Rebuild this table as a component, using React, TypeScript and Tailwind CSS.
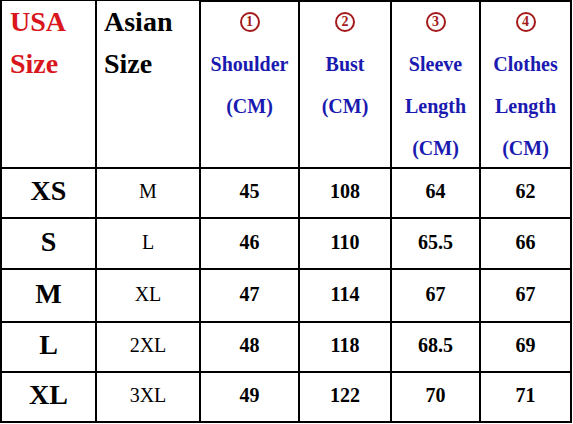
import React from "react";

function Circled({ n }: { n: string }) {
  return (
    <span className="inline-flex h-[20px] w-[20px] items-center justify-center rounded-full border-2 border-[#a31b1b] text-[14px] font-bold leading-none text-[#a31b1b]">
      {n}
    </span>
  );
}

function HeadCell({ n, lines }: { n: string; lines: string[] }) {
  return (
    <div className="flex flex-col items-center overflow-hidden bg-white text-[20px] font-bold leading-[42px] text-[#1a1ab0]">
      <div className="-mt-px flex h-[42px] shrink-0 items-center">
        <Circled n={n} />
      </div>
      {lines.map((l) => (
        <div key={l} className="h-[42px] shrink-0">
          {l}
        </div>
      ))}
    </div>
  );
}

const rows = [
  ["XS", "M", "45", "108", "64", "62"],
  ["S", "L", "46", "110", "65.5", "66"],
  ["M", "XL", "47", "114", "67", "67"],
  ["L", "2XL", "48", "118", "68.5", "69"],
  ["XL", "3XL", "49", "122", "70", "71"],
];

export default function App() {
  return (
    <div className="h-[424px] w-[573px] bg-white font-['Liberation_Serif','Times_New_Roman',serif]">
      <div className="grid w-fit grid-cols-[93px_102px_97px_90px_87px_89px] grid-rows-[165px_48px_49px_51px_48px_48px] gap-[2px] bg-black p-[2px]">
        <div className="-mt-px bg-white pl-[8px] text-[28px] font-bold leading-[42px] text-[#d8161c]">
          <div>USA</div>
          <div>Size</div>
        </div>
        <div className="-mt-px bg-white pl-[7px] text-[28px] font-bold leading-[42px] text-black">
          <div>Asian</div>
          <div>Size</div>
        </div>
        <HeadCell n="1" lines={["Shoulder", "(CM)"]} />
        <HeadCell n="2" lines={["Bust", "(CM)"]} />
        <HeadCell n="3" lines={["Sleeve", "Length", "(CM)"]} />
        <HeadCell n="4" lines={["Clothes", "Length", "(CM)"]} />
        {rows.map((r) =>
          r.map((v, i) => (
            <div
              key={r[0] + i}
              className={
                i === 0
                  ? "flex items-center justify-center bg-white pb-[4px] text-[28px] font-bold text-black"
                  : i === 1
                  ? "flex items-center justify-center bg-white pb-[4px] text-[20px] font-normal text-black"
                  : "flex items-center justify-center bg-white pb-[4px] text-[20px] font-bold text-black"
              }
            >
              {v}
            </div>
          ))
        )}
      </div>
    </div>
  );
}
